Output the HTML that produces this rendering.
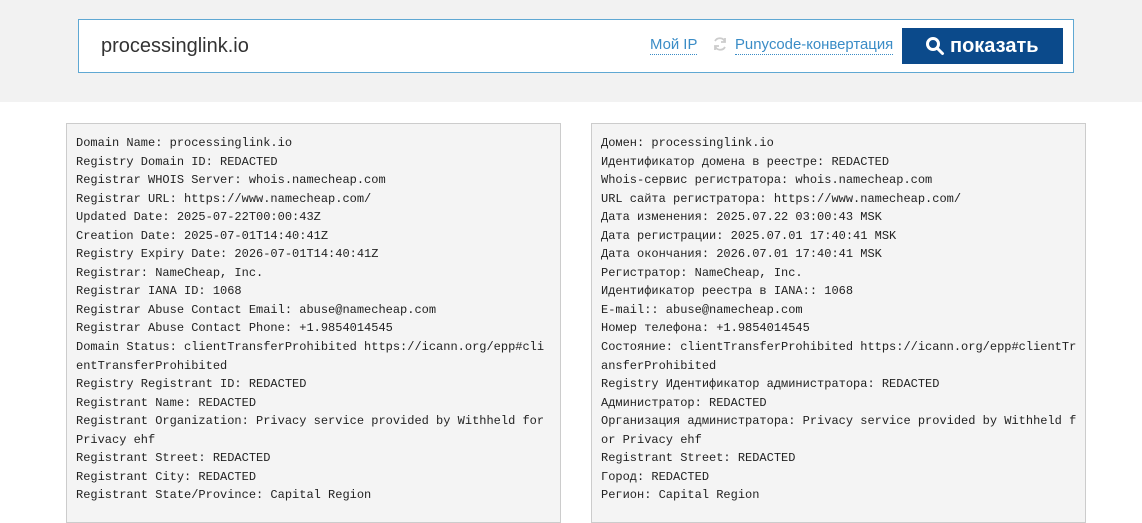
<!DOCTYPE html>
<html><head><meta charset="utf-8"><style>
*{margin:0;padding:0;box-sizing:border-box}
body{width:1142px;height:502px;overflow:hidden;background:#fff;font-family:"Liberation Sans",sans-serif}
.top{position:absolute;left:0;top:0;width:1142px;height:102px;background:#f2f2f2}
.search{position:absolute;left:78px;top:19px;width:996px;height:54px;background:#fff;border:1px solid #5fa8d3}
.dom{position:absolute;left:22px;top:15px;font-size:20px;color:#333}
.lnk{position:absolute;top:17px;font-size:14.9px;color:#3a8cc6;border-bottom:1px dotted #3a8cc6;line-height:17px}
.btn{position:absolute;left:823px;top:8px;width:161px;height:36px;background:#0b4a8b;color:#fff;font-weight:bold;font-size:20px;line-height:36px;padding-left:48px}
.box{position:absolute;top:123px;width:495px;height:400px;background:#f4f4f4;border:1px solid #ccc;padding:10px 0 0 9px;font-family:"Liberation Mono",monospace;font-size:12px;line-height:18.55px;color:#222;white-space:pre}
</style></head><body>
<div class="top"></div>
<div class="search">
<div class="dom">processinglink.io</div>
<span class="lnk" style="left:571px">Мой IP</span>
<svg style="position:absolute;left:633px;top:16px" width="16" height="16" viewBox="0 0 16 16" fill="none" stroke="#ccc" stroke-width="1.8"><path d="M13 6A5.5 5.5 0 0 0 3 5"/><path d="M3 10a5.5 5.5 0 0 0 10 1"/><path d="M13 2v4h-4" /><path d="M3 14v-4h4"/></svg>
<span class="lnk" style="left:656px">Punycode-конвертация</span>
<div class="btn"><svg style="position:absolute;left:23px;top:8px" width="20" height="20" viewBox="0 0 20 20" fill="none" stroke="#fff" stroke-width="3"><circle cx="8" cy="8" r="5.5"/><path d="M12 12l5.5 5.5" stroke-linecap="round"/></svg>показать</div>
</div>
<div class="box" style="left:66px">Domain Name: processinglink.io
Registry Domain ID: REDACTED
Registrar WHOIS Server: whois.namecheap.com
Registrar URL: https://www.namecheap.com/
Updated Date: 2025-07-22T00:00:43Z
Creation Date: 2025-07-01T14:40:41Z
Registry Expiry Date: 2026-07-01T14:40:41Z
Registrar: NameCheap, Inc.
Registrar IANA ID: 1068
Registrar Abuse Contact Email: abuse@namecheap.com
Registrar Abuse Contact Phone: +1.9854014545
Domain Status: clientTransferProhibited https://icann.org/epp#cli
entTransferProhibited
Registry Registrant ID: REDACTED
Registrant Name: REDACTED
Registrant Organization: Privacy service provided by Withheld for
Privacy ehf
Registrant Street: REDACTED
Registrant City: REDACTED
Registrant State/Province: Capital Region</div>
<div class="box" style="left:591px">Домен: processinglink.io
Идентификатор домена в реестре: REDACTED
Whois-сервис регистратора: whois.namecheap.com
URL сайта регистратора: https://www.namecheap.com/
Дата изменения: 2025.07.22 03:00:43 MSK
Дата регистрации: 2025.07.01 17:40:41 MSK
Дата окончания: 2026.07.01 17:40:41 MSK
Регистратор: NameCheap, Inc.
Идентификатор реестра в IANA:: 1068
E-mail:: abuse@namecheap.com
Номер телефона: +1.9854014545
Состояние: clientTransferProhibited https://icann.org/epp#clientTr
ansferProhibited
Registry Идентификатор администратора: REDACTED
Администратор: REDACTED
Организация администратора: Privacy service provided by Withheld f
or Privacy ehf
Registrant Street: REDACTED
Город: REDACTED
Регион: Capital Region</div>
</body></html>
